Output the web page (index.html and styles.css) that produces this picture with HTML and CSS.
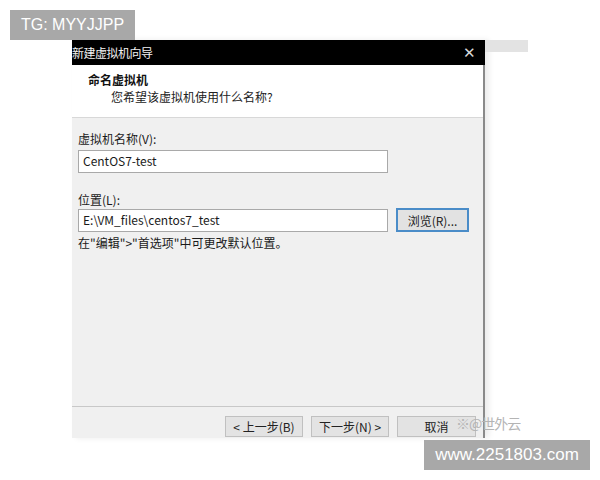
FILE: index.html
```html
<!DOCTYPE html>
<html>
<head>
<meta charset="utf-8">
<link rel="stylesheet" href="styles.css">
</head>
<body>
<div class="tag tag-top">TG: MYYJJPP</div>
<div class="stage">
  <div class="dialog">
    <div class="titlebar">
      <span class="title">新建虚拟机向导</span>
      <span class="close">✕</span>
    </div>
    <div class="header">
      <div class="h-title">命名虚拟机</div>
      <div class="h-sub">您希望该虚拟机使用什么名称?</div>
    </div>
    <div class="content">
      <div class="label">虚拟机名称(V):</div>
      <div class="row">
        <div class="field field-name">CentOS7-test</div>
      </div>
      <div class="label label-loc">位置(L):</div>
      <div class="row">
        <div class="field field-loc">E:\VM_files\centos7_test</div>
        <div class="btn btn-browse">浏览(R)...</div>
      </div>
      <div class="note">在"编辑"&gt;"首选项"中可更改默认位置。</div>
    </div>
    <div class="footer">
      <div class="btn btn-foot">&lt; 上一步(B)</div>
      <div class="btn btn-foot">下一步(N) &gt;</div>
      <div class="btn btn-foot btn-cancel">取消</div>
    </div>
  </div>
  <div class="side-strip"></div>
</div>
<div class="wm">※@世外云</div>
<div class="tag tag-bottom">www.2251803.com</div>
</body>
</html>
```
FILE: styles.css
```css
html, body {
  margin: 0;
  padding: 0;
  background: #ffffff;
  width: 600px;
  height: 480px;
  overflow: hidden;
  font-family: "Noto Sans CJK SC", "Noto Sans", sans-serif;
  position: relative;
}
.stage {
  padding: 40px 0 0 72px;
  display: flex;
  align-items: flex-start;
}
.dialog {
  width: 411px;
  border-right: 2px solid #8a8a8a;
  box-shadow: 4px 0 6px rgba(0,0,0,0.08);
  display: flex;
  flex-direction: column;
  background: #f0f0f0;
}
.side-strip {
  width: 43px;
  height: 12px;
  background: #e3e3e3;
}
.titlebar {
  height: 25px;
  background: #000;
  color: #fff;
  display: flex;
  align-items: center;
  justify-content: space-between;
  font-size: 12px;
  margin-right: -2px;
}
.title {
  letter-spacing: -0.5px;
  color: #f2f2f2;
}
.close {
  font-size: 15px;
  margin-right: 9px;
  color: #d8d8d8;
  font-family: "DejaVu Sans", sans-serif;
  font-weight: 300;
}
.header {
  height: 53px;
  background: #fff;
  border-bottom: 1px solid #d8d8d8;
  font-size: 12px;
  color: #111;
  box-sizing: border-box;
  padding-top: 7px;
}
.h-title {
  margin-left: 16px;
  font-weight: bold;
  line-height: 16px;
}
.h-sub {
  margin-left: 39px;
  line-height: 16px;
  margin-top: 1px;
  color: #222;
}
.content {
  height: 289px;
  padding: 13px 0 0 6px;
  box-sizing: border-box;
  font-size: 12px;
  color: #1a1a1a;
  border-bottom: 1px solid #c8c8c8;
}
.label {
  line-height: 16px;
  height: 18px;
}
.label-loc {
  margin-top: 19px;
  height: 16px;
}
.row {
  display: flex;
  align-items: center;
  gap: 8px;
}
.field {
  height: 23px;
  box-sizing: border-box;
  border: 1px solid #a9a9a9;
  background: #fff;
  line-height: 20px;
  padding-left: 4px;
  font-size: 12px;
}
.field-name { width: 310px; margin-top: 1px; }
.field-loc { width: 310px; }
.btn {
  box-sizing: border-box;
  background: #e1e1e1;
  border: 1px solid #adadad;
  font-size: 12px;
  display: flex;
  align-items: center;
  justify-content: center;
  color: #222;
}
.btn-browse {
  width: 73px;
  height: 24px;
  border: 2px solid #4a8cc8;
  background: #e2e2e2;
}
.note {
  margin-top: 3px;
  line-height: 16px;
}
.footer {
  height: 31px;
  display: flex;
  justify-content: flex-end;
  align-items: flex-start;
  gap: 8px;
  padding: 9px 7px 0 0;
  box-sizing: border-box;
}
.btn-foot {
  width: 78px;
  height: 21px;
  background: #e3e3e3;
  border-color: #c0c0c0;
}
.btn-cancel {
  width: 79px;
}
.tag {
  position: absolute;
  background: #a8a8a8;
  color: #fff;
  font-family: "Liberation Sans", Arial, sans-serif;
  display: flex;
  align-items: center;
  justify-content: center;
}
.tag-top {
  left: 10px;
  top: 10px;
  width: 125px;
  height: 30px;
  font-size: 16px;
}
.tag-bottom {
  left: 424px;
  top: 440px;
  width: 166px;
  height: 30px;
  font-size: 17px;
}
.wm {
  position: absolute;
  left: 456px;
  top: 413px;
  font-size: 14px;
  color: #b4b4b4;
  letter-spacing: -1px;
}
```
